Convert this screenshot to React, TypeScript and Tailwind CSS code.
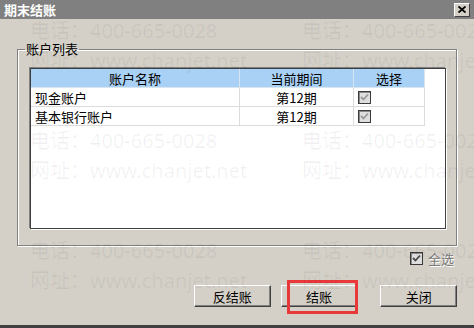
import React from "react";

const UI_FONT = "font-['Noto_Sans_CJK_SC','Noto_Sans',sans-serif]";

const ACCOUNTS = [
  { name: "现金账户", period: "第12期" },
  { name: "基本银行账户", period: "第12期" },
];

function Check({ dark = false }: { dark?: boolean }) {
  return (
    <div className="w-[13px] h-[13px] border border-[#3a3a3a] bg-[#dedede] shadow-[inset_1px_1px_0_#8a8a8a] flex items-center justify-center">
      <svg width="9" height="9" viewBox="0 0 9 9">
        <path
          d="M1 4 L3.5 6.5 L8 1.5"
          fill="none"
          stroke={dark ? "#4a4a4a" : "#9a9a9a"}
          strokeWidth="1.8"
        />
      </svg>
    </div>
  );
}

function Button({ label, className = "" }: { label: string; className?: string }) {
  return (
    <button
      className={`h-[22px] w-[77px] bg-[#d4d0c8] border border-t-white border-l-white border-r-[#404040] border-b-[#404040] shadow-[inset_-1px_-1px_0_#808080] text-[13px] leading-none text-black ${className}`}
    >
      {label}
    </button>
  );
}

function Watermark() {
  const rows = [0, 110, 220];
  const cols = [30, 302];
  return (
    <div className="absolute inset-0 pointer-events-none overflow-hidden font-['Noto_Sans','Noto_Sans_CJK_SC',sans-serif] text-[20px] leading-none text-black/[0.06]">
      {rows.map((dy) =>
        cols.map((x) => (
          <React.Fragment key={`${dy}-${x}`}>
            <span className="absolute whitespace-nowrap" style={{ left: x, top: 21 + dy }}>
              电话：400-665-0028
            </span>
            <span className="absolute whitespace-nowrap" style={{ left: x, top: 51 + dy }}>
              网址：www.chanjet.net
            </span>
          </React.Fragment>
        ))
      )}
    </div>
  );
}

export default function App() {
  return (
    <div className={`relative w-[474px] h-[328px] bg-[#d4d0c8] flex flex-col overflow-hidden ${UI_FONT}`}>
      {/* Title bar */}
      <div className="h-[19px] bg-[#808080] flex items-center justify-between pl-[4px] pr-[4px]">
        <span className="text-white font-bold text-[13px] leading-none">期末结账</span>
        <div className="w-[16px] h-[14px] bg-[#d4d0c8] border border-t-white border-l-white border-r-[#404040] border-b-[#404040] flex items-center justify-center">
          <svg width="8" height="7" viewBox="0 0 8 7">
            <path d="M0.5 0.5 L7.5 6.5 M7.5 0.5 L0.5 6.5" stroke="#000" strokeWidth="1.8" />
          </svg>
        </div>
      </div>

      <div className="flex-1 flex flex-col px-[17px]">
        {/* Group box */}
        <fieldset className="mt-[22px] h-[205px] w-[440px] border border-[#808080] shadow-[inset_1px_1px_0_#fff,1px_1px_0_#fff]">
          <legend className="ml-[7px] px-[1px] text-[13px] leading-[16px] text-black">账户列表</legend>
          <div className="ml-[12px] mt-[11px] w-[416px] h-[161px] bg-white border border-[#404040] shadow-[-1px_-1px_0_#808080,1px_1px_0_#fff]">
            <div className="grid grid-cols-[209px_114px_71px] text-[13px] leading-none text-black">
              {["账户名称", "当前期间", "选择"].map((h) => (
                <div
                  key={h}
                  className="h-[19px] bg-[#a9d0f5] border-r border-b border-r-[#d8e6f2] border-b-[#d8e6f2] flex items-center justify-center"
                >
                  {h}
                </div>
              ))}
              {ACCOUNTS.map((a) => (
                <React.Fragment key={a.name}>
                  <div className="h-[19px] border-r border-b border-[#dcdcdc] flex items-center pl-[4px]">{a.name}</div>
                  <div className="h-[19px] border-r border-b border-[#dcdcdc] flex items-center justify-center">{a.period}</div>
                  <div className="h-[19px] border-r border-b border-[#dcdcdc] flex items-center pl-[4px]">
                    <Check />
                  </div>
                </React.Fragment>
              ))}
            </div>
          </div>
        </fieldset>

        {/* Select all */}
        <div className="mt-[6px] flex items-center justify-end gap-[5px] pr-[3px]">
          <Check dark />
          <span className="text-[13px] leading-none text-[#7a7a7a] [text-shadow:1px_1px_0_#fff]">全选</span>
        </div>

        {/* Buttons */}
        <div className="mt-[20px] flex items-center">
          <Button label="反结账" className="ml-[177px]" />
          <Button label="结账" className="ml-[10px]" />
          <Button label="关闭" className="ml-[23px]" />
        </div>
      </div>

      <div className="h-[3px] bg-[#404040]" />

      {/* highlight marker */}
      <div className="absolute left-[287px] top-[280px] w-[71px] h-[34px] border-[3px] border-[#e8383a] pointer-events-none" />

      <Watermark />
    </div>
  );
}
